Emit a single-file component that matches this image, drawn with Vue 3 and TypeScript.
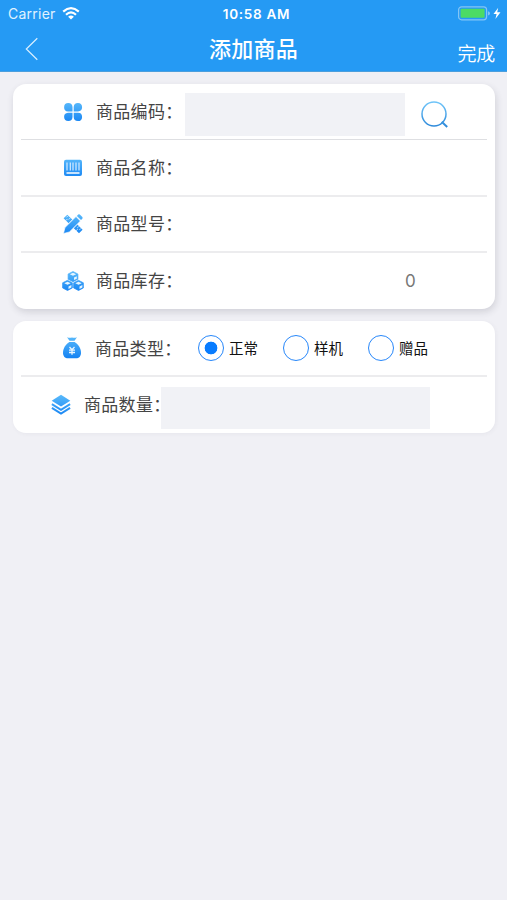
<script setup lang="ts">
import { ref } from 'vue'

interface Field {
  key: string
  label: string
}

const fields: Field[] = [
  { key: 'code', label: '商品编码：' },
  { key: 'name', label: '商品名称：' },
  { key: 'model', label: '商品型号：' },
  { key: 'stock', label: '商品库存：' },
]

const kinds: string[] = ['正常', '样机', '赠品']
const selected = ref<string>('正常')
const code = ref<string>('')
const amount = ref<string>('')
const stock = ref<number>(0)
</script>

<template>
  <div class="screen">
    <svg class="defs" width="0" height="0" aria-hidden="true">
      <defs>
        <linearGradient id="blue" gradientUnits="userSpaceOnUse" x1="0" y1="0" x2="0" y2="22">
          <stop offset="0" stop-color="#5cbcfb" />
          <stop offset="1" stop-color="#1583f3" />
        </linearGradient>
        <linearGradient id="lens" gradientUnits="userSpaceOnUse" x1="0" y1="0" x2="0" y2="28">
          <stop offset="0" stop-color="#74c9fb" />
          <stop offset="1" stop-color="#2a86d8" />
        </linearGradient>
      </defs>
    </svg>

    <header class="header">
      <div class="status">
        <div class="carrier">
          <span>Carrier</span>
          <svg width="18" height="13" viewBox="0 0 18 13" fill="none" stroke="#fff" stroke-width="2.2">
            <path d="M1.2 4.6Q9-2.2 16.8 4.6" />
            <path d="M4 7.7Q9 3.2 14 7.7" />
            <path d="M6.1 9.7Q9 7.2 11.9 9.7L9 12.5Z" fill="#fff" stroke="none" />
          </svg>
        </div>
        <span class="clock">10:58 AM</span>
        <div class="power">
          <svg width="44" height="15" viewBox="0 0 44 15">
            <rect x=".6" y=".8" width="28" height="13" rx="3" fill="none" stroke="#83c5f5" stroke-width="1.2" />
            <rect x="2.6" y="2.8" width="24" height="9" rx="1" fill="#4cdb64" />
            <path d="M30 5.2q2 .3 2 2.1t-2 2.1z" fill="#83c5f5" />
            <path d="M40.2 1.8L35.5 8h3.1l-1.2 5 5.1-6.7h-3.3z" fill="#fff" />
          </svg>
        </div>
      </div>
      <nav class="nav">
        <button class="back" aria-label="返回">
          <svg width="14" height="24" viewBox="0 0 14 24" fill="none" stroke="#d9efff" stroke-width="1.2">
            <path d="M12.3 1.2L1.3 12l11 10.8" />
          </svg>
        </button>
        <h1>添加商品</h1>
        <button class="done">完成</button>
      </nav>
    </header>

    <main>
      <section class="card details">
        <div v-for="field in fields" :key="field.key" class="row" :class="field.key">
          <svg class="icon" width="22" height="22" viewBox="0 0 22 22" fill="url(#blue)">
            <g v-if="field.key === 'code'">
              <path d="M10.5 10.5H6A4.2 4.2 0 1 1 10.5 6z" />
              <path d="M11.7 10.5H16A4.2 4.2 0 1 0 11.7 6z" />
              <path d="M10.5 11.7H6A4.2 4.2 0 1 0 10.5 16z" />
              <path d="M11.7 11.7H16A4.2 4.2 0 1 1 11.7 16z" />
            </g>
            <g v-else-if="field.key === 'name'">
              <rect x="2" y="2.7" width="18" height="16.4" rx="2" />
              <path d="M5 5.4v8M8.3 5.4v8M11 5.4v8M14 5.4v8M17 5.4v8" stroke="#d4ecff" stroke-width="1.2" />
              <path d="M4.5 16h13" stroke="#fff" stroke-width="1.5" />
            </g>
            <g v-else-if="field.key === 'model'">
              <path d="M1.6 5.2l3.7-3.5 5 4.9-3.7 3.6zM11.8 15.2l3.6-3.6 5.2 5.2-3.6 3.5z" />
              <path d="M4 7.4l1.5-1.5M5.7 3.1l-1.2 1.2M8 5.2L6.8 6.4M14.2 17.6l1.6-1.6M16.7 13.5l-1.2 1.2M18.8 15.5l-1.3 1.3" stroke="#fff" stroke-width=".8" />
              <path d="M1.5 20.5l1.5-6L14 3.6l4.4 4.4L7.4 18.9z" stroke="#fff" stroke-width=".6" />
              <path d="M14.9 2.9l1.3-1.3q.8-.6 1.6 0l2.5 2.5q.7.8 0 1.6L19 7z" />
            </g>
            <g v-else stroke="url(#blue)" stroke-width=".7">
              <path d="M11 1.5l4.9 2.5v5.2L11 11.7 6.1 9.2V4z" />
              <path d="M5.5 10.3l4.9 2.5v5.1l-4.9 2.6-4.9-2.6v-5.1z" />
              <path d="M16.5 10.3l4.9 2.5v5.1l-4.9 2.6-4.9-2.6v-5.1z" />
              <path d="M11 2.8l3.2 1.5L11 5.8 7.8 4.3zM5.5 11.7l3.2 1.5-3.2 1.5-3.2-1.5zM16.5 11.7l3.2 1.5-3.2 1.5-3.2-1.5zM12 7.5l2.8-1.3v2.5L12 10zM6.5 16.4l2.9-1.3v2.4l-2.9 1.4zM17.5 16.4l2.9-1.3v2.4l-2.9 1.4z" fill="#e5f5ff" stroke="none" />
            </g>
          </svg>
          <label class="label">{{ field.label }}</label>
          <template v-if="field.key === 'code'">
            <input v-model="code" class="input code-input" />
            <button class="search" aria-label="搜索">
              <svg width="30" height="30" viewBox="0 0 30 30" fill="none" stroke="url(#lens)" stroke-width="1.5">
                <circle cx="14" cy="14" r="12" />
                <path d="M21.7 21.8l5.5 5.2" stroke-width="2" />
              </svg>
            </button>
          </template>
          <span v-if="field.key === 'stock'" class="stock-value">{{ stock }}</span>
        </div>
      </section>

      <section class="card extra">
        <div class="row kind">
          <svg class="icon" width="22" height="24" viewBox="0 0 22 24" fill="url(#blue)">
            <path d="M6 1.2q2.5 1 5 .3 2.5.7 5-.3l-2.5 3.5h-5z" />
            <path d="M8.3 6h5.4c3.5 2.2 6.3 6.5 6.3 10.5 0 4-2 5.8-5 5.8H7c-3 0-5-1.8-5-5.8C2 12.5 4.8 8.2 8.3 6z" />
            <path d="M8.5 11L11 13.700l2.500-2.700M8 14.200h6M8 16.500h6M11 13.700v5" stroke="#e8f6ff" stroke-width="1.3" fill="none" />
          </svg>
          <span class="label">商品类型：</span>
          <div class="options">
            <label v-for="kind in kinds" :key="kind" class="option">
              <input v-model="selected" type="radio" name="kind" :value="kind" />
              <span>{{ kind }}</span>
            </label>
          </div>
        </div>
        <div class="row amount">
          <svg class="icon" width="22" height="22" viewBox="0 0 22 22" fill="url(#blue)">
            <path d="M11 .8l9.3 5.9-9.3 5.900L1.700 6.700z" />
            <path d="M1.900 10.200L11 15.900l9.100-5.700M1.900 13.900L11 19.600l9.100-5.700" fill="none" stroke="url(#blue)" stroke-width="2" />
          </svg>
          <label class="label">商品数量：</label>
          <input v-model="amount" class="input amount-input" />
        </div>
      </section>
    </main>
  </div>
</template>

<style>
body {
  margin: 0;
  background: #f0f0f5;
}
</style>

<style scoped>
.screen {
  width: 100%;
  min-height: 900px;
  background: #f0f0f5;
  font-family: "Liberation Sans", "Noto Sans CJK SC", sans-serif;
  color: #444;
}
.defs {
  display: block;
  height: 0;
}
svg {
  display: block;
  flex: none;
}
button {
  border: 0;
  padding: 0;
  background: none;
  font: inherit;
  color: inherit;
}
.header {
  box-sizing: border-box;
  height: 72px;
  background: #259af4;
  border-bottom: 1px solid #4c9fdd;
  color: #fff;
}
.status {
  display: grid;
  grid-template-columns: 1fr auto 1fr;
  align-items: center;
  height: 27px;
  padding: 0 5px 0 8px;
  font-family: Inter, sans-serif;
  font-size: 13.5px;
}
.carrier {
  display: flex;
  align-items: center;
  gap: 6px;
  color: #e0f2ff;
  font-size: 14px;
  letter-spacing: 0.25px;
}
.clock {
  margin-left: 3px;
  font-size: 13.5px;
  font-weight: 600;
  letter-spacing: 0.7px;
}
.power {
  justify-self: end;
}
.nav {
  display: grid;
  grid-template-columns: 1fr auto 1fr;
  height: 44px;
  padding: 0 12px 0 25px;
}
.back {
  justify-self: start;
  align-self: start;
  padding-top: 10px;
}
h1 {
  margin: 0 13px 0 0;
  font-size: 22px;
  line-height: 45px;
  font-weight: 500;
  letter-spacing: 0.2px;
}
.done {
  justify-self: end;
  align-self: start;
  font-size: 19px;
  line-height: 55px;
  letter-spacing: -0.2px;
  font-weight: 350;
}
main {
  display: flex;
  flex-direction: column;
  gap: 12px;
  padding: 12px 12px 0 13px;
}
.card {
  border-radius: 13px;
  background: #fff;
  padding: 0 8px;
}
.details {
  height: 225px;
  box-shadow: 1px 3px 7px rgba(50, 50, 70, 0.16);
}
.extra {
  height: 112px;
  box-shadow: 1px 1px 4px rgba(50, 50, 70, 0.05);
}
.row {
  box-sizing: border-box;
  display: flex;
  align-items: center;
  height: 56px;
  padding-left: 41px;
  border-bottom: 1px solid #dedfe2;
}
.name,
.model,
.kind {
  border-bottom: 2px solid #ececee;
}
.name {
  height: 57px;
}
.details .row:last-child {
  padding-bottom: 1px;
}
.row:last-child {
  border-bottom: 0;
}
.label {
  width: 89px;
  margin-left: 12px;
  padding-top: 2px;
  flex: none;
  font-size: 17px;
  line-height: 26px;
  letter-spacing: 0.3px;
  white-space: nowrap;
}
.input {
  box-sizing: border-box;
  border: 0;
  border-radius: 0;
  padding: 0 8px;
  height: 43px;
  background: #f1f2f6;
  font: inherit;
  outline: none;
}
.code-input {
  width: 220px;
  margin-top: 5px;
}
.search {
  margin: 7px 0 0 15px;
}
.stock-value {
  margin-left: 220px;
  font-family: Inter, sans-serif;
  font-size: 17px;
  color: #777;
}
.kind {
  padding-left: 40px;
}
.kind .label {
  padding-top: 3px;
}
.options {
  display: flex;
  margin-left: 14px;
}
.option {
  display: flex;
  align-items: center;
  width: 85px;
  gap: 5px;
  font-size: 14.5px;
  line-height: 22px;
  color: #111;
}
.option span {
  padding-top: 1px;
}
.option input {
  appearance: none;
  box-sizing: border-box;
  flex: none;
  width: 26px;
  height: 26px;
  margin: 0;
  border: 1.5px solid #2787fa;
  border-radius: 50%;
}
.option input:checked {
  background: radial-gradient(circle, #087cff 6px, transparent 6.7px);
}
.amount {
  padding-left: 29px;
}
.amount .label {
  width: 77px;
}
.amount-input {
  width: 269px;
  height: 42px;
  margin-top: 6px;
}
</style>
